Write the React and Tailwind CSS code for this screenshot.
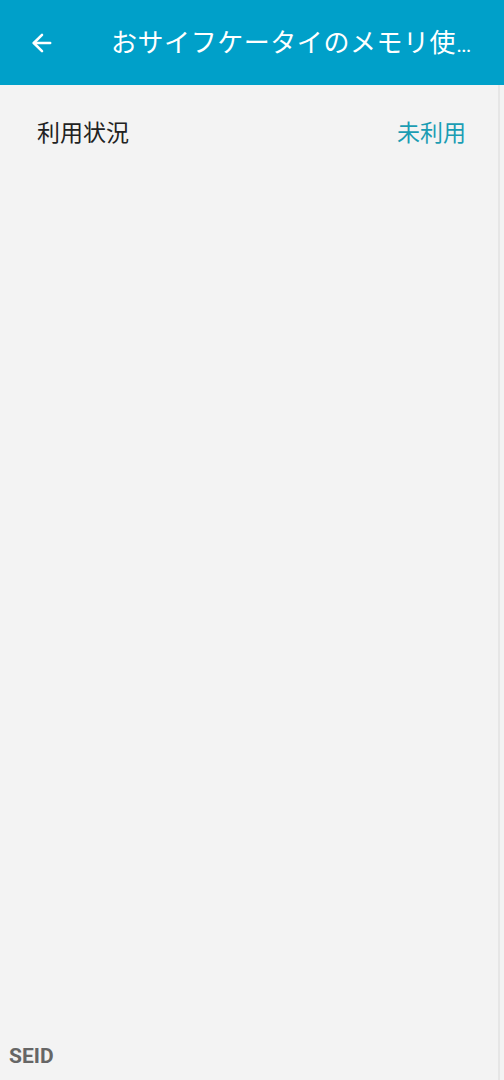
import { ArrowLeft } from 'lucide-react';

const jp = { fontFamily: 'Roboto, "Noto Sans CJK JP", sans-serif' };

export default function App() {
  return (
    <div className="w-[504px] h-[1080px] flex flex-col bg-[#f3f3f3] overflow-hidden" style={jp}>
      {/* App bar */}
      <div className="h-[85px] shrink-0 bg-[#00a0c9] flex items-center pl-[28px]">
        <ArrowLeft className="w-[28px] h-[28px] text-white shrink-0" strokeWidth={2.2} />
        <h1 className="ml-[55px] text-[26px] leading-none text-white whitespace-nowrap tracking-[0.55px]">
          おサイフケータイのメモリ使<span className="tracking-[-1px] text-[22px]">...</span>
        </h1>
      </div>

      {/* Body */}
      <div className="flex-1 flex flex-col mr-[4px] border-r-2 border-[#e6e6e6]">
        <div className="flex items-center justify-between pl-[37px] pr-[32px] h-[98px]">
          <span className="text-[23px] text-[#222222]">利用状況</span>
          <span className="text-[23px] text-[#1b9db3]">未利用</span>
        </div>
        <div className="flex-1" />
        <div className="pl-[9px] pb-[8px]">
          <span className="text-[21px] font-bold text-[#666666]">SEID</span>
        </div>
      </div>
    </div>
  );
}
